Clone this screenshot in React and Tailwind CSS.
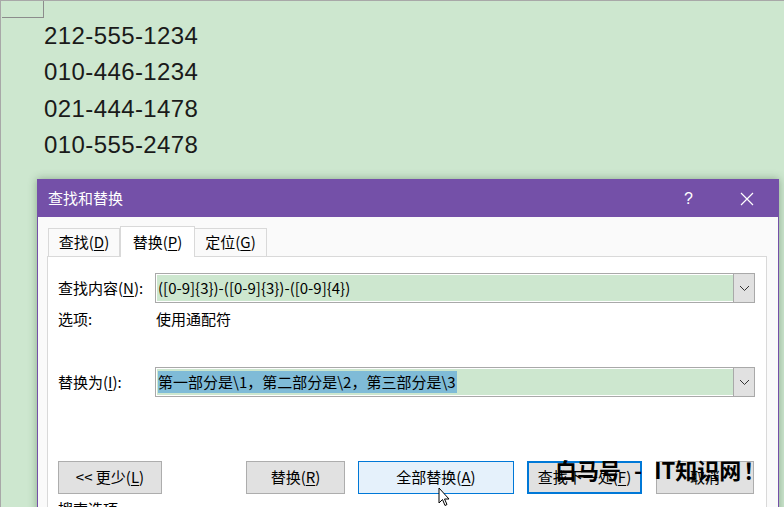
import React from "react";

const ui = { fontFamily: '"Noto Sans CJK SC", "Microsoft YaHei", sans-serif' };

function Key({ children }) {
  return <span className="underline underline-offset-2">{children}</span>;
}

function Chevron() {
  return (
    <svg width="11" height="7" viewBox="0 0 11 7" fill="none">
      <path d="M1 1l4.5 4.5L10 1" stroke="#333" strokeWidth="1" />
    </svg>
  );
}

function Combo({ children }) {
  return (
    <div className="flex h-[30px] w-[600px] border border-[#a9a9a9] bg-white">
      <div className="flex flex-1 items-center bg-[#cde7cf] my-px ml-px pl-[1px] text-[15px] text-black overflow-hidden whitespace-nowrap">
        {children}
      </div>
      <div className="flex w-[21px] items-center justify-center border-l border-[#a9a9a9] bg-[#e1e1e1]">
        <Chevron />
      </div>
    </div>
  );
}

function Btn({ children, w, variant }) {
  const base = "flex h-[33px] items-center justify-center text-[15px] text-black";
  const look =
    variant === "hover"
      ? "border border-[#0078d7] bg-[#e5f1fb]"
      : variant === "focus"
      ? "border-2 border-[#0078d7] bg-[#e1e1e1]"
      : "border border-[#adadad] bg-[#e1e1e1]";
  return (
    <div className={`${base} ${look}`} style={{ width: w }}>
      {children}
    </div>
  );
}

export default function App() {
  return (
    <div
      className="relative h-[507px] w-[784px] overflow-hidden border-t border-l border-[#a8a8a8] bg-[#cde7cf]"
      style={ui}
    >
      {/* page corner mark */}
      <div className="ml-[1px] h-[17px] w-[42px] border-b border-r border-[#8c8c8c]" />

      {/* document text */}
      <div
        className="pl-[43px] text-[24px] leading-[36.3px] tracking-[0.4px] text-[#1a1a1a]"
        style={{ fontFamily: '"Liberation Sans", Arial, sans-serif' }}
      >
        <div>212-555-1234</div>
        <div>010-446-1234</div>
        <div>021-444-1478</div>
        <div>010-555-2478</div>
      </div>

      {/* dialog */}
      <div className="ml-[36px] mt-[16px] w-[742px] border border-[#7450a8] bg-[#fafafa] shadow-[0_0_8px_rgba(60,90,60,0.45)]">
        <div className="flex h-[37px] items-center bg-[#7450a8] pl-[10px] text-[15px] text-white">
          <span className="flex-1">查找和替换</span>
          <span className="mr-[47px] text-[16px]" style={{ fontFamily: '"Liberation Sans", sans-serif' }}>
            ?
          </span>
          <span className="mr-[24px] flex items-center">
            <svg width="14" height="14" viewBox="0 0 14 14">
              <path d="M1 1l12 12M13 1L1 13" stroke="white" strokeWidth="1.2" />
            </svg>
          </span>
        </div>

        <div className="pl-[10px] pt-[9px]">
          {/* tabs */}
          <div className="flex items-end text-[15px] text-black">
            <div className="flex h-[28px] w-[72px] items-center justify-center border border-b-0 border-[#d9d9d9]">
              查找(<Key>D</Key>)
            </div>
            <div className="relative z-10 -mb-px flex h-[31px] w-[75px] items-center justify-center border border-b-0 border-[#d9d9d9] bg-white">
              替换(<Key>P</Key>)
            </div>
            <div className="flex h-[28px] w-[72px] items-center justify-center border border-b-0 border-l-0 border-[#d9d9d9]">
              定位(<Key>G</Key>)
            </div>
          </div>

          {/* panel */}
          <div className="-ml-px w-[720px] border border-[#d9d9d9] bg-white pl-[10px] pt-[16px] pb-[20px] text-[15px] text-black">
            <div className="flex items-center">
              <div className="w-[97px]">
                查找内容(<Key>N</Key>):
              </div>
              <Combo>
                <span>([0-9]{"{3}"})-([0-9]{"{3}"})-([0-9]{"{4}"})</span>
              </Combo>
            </div>

            <div className="mt-[5px] flex h-[22px] items-center">
              <div className="w-[98px]">选项:</div>
              <div>使用通配符</div>
            </div>

            <div className="mt-[37px] flex items-center">
              <div className="w-[97px]">
                替换为(<Key>I</Key>):
              </div>
              <Combo>
                <span className="bg-[#7fbbd7] pr-[1px]">第一部分是\1，第二部分是\2，第三部分是\3</span>
              </Combo>
            </div>

            <div className="mt-[64px] flex items-center">
              <Btn w={104}>
                &lt;&lt; 更少(<Key>L</Key>)
              </Btn>
              <div className="w-[84px]" />
              <Btn w={99}>
                替换(<Key>R</Key>)
              </Btn>
              <div className="w-[13px]" />
              <Btn w={156} variant="hover">
                全部替换(<Key>A</Key>)
              </Btn>
              <div className="w-[13px]" />
              <Btn w={115} variant="focus">
                查找下一处(<Key>F</Key>)
              </Btn>
              <div className="w-[14px]" />
              <Btn w={98}>取消</Btn>
            </div>

            <div className="mt-[4px]">搜索选项</div>
          </div>
        </div>
      </div>

      {/* watermark */}
      <div className="absolute left-[554px] top-[457px] flex items-center whitespace-nowrap text-[22px] font-bold leading-none text-black">
        <span>白马号</span>
        <span className="ml-[13px] mr-[12px]">-</span>
        <span>IT知识网</span>
        <span className="ml-[2px]">！</span>
      </div>

      {/* mouse cursor */}
      <svg className="absolute left-[437px] top-[486px]" width="13" height="20" viewBox="0 0 13 20">
        <path d="M1 1v15l3.5-3.5 2.5 6 2-1-2.5-5.5H11L1 1z" fill="white" stroke="black" strokeWidth="1" />
      </svg>
    </div>
  );
}
